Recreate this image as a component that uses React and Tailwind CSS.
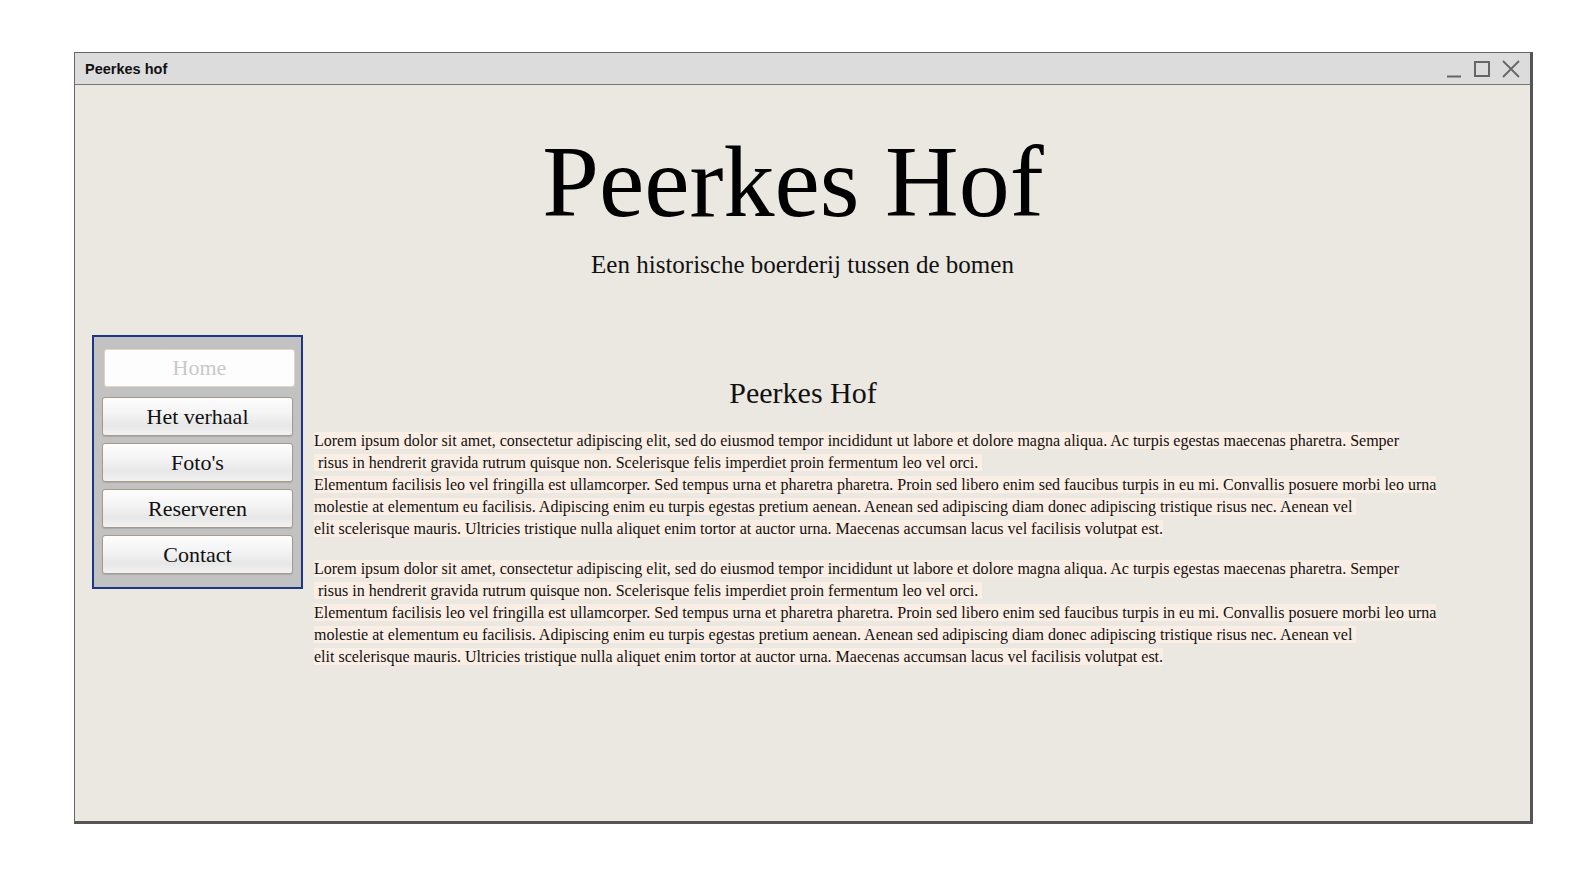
import React from 'react';

const serif = { fontFamily: '"Liberation Serif", "Times New Roman", serif' };

const navItems = ['Het verhaal', "Foto's", 'Reserveren', 'Contact'];

const paragraphLines = [
  'Lorem ipsum dolor sit amet, consectetur adipiscing elit, sed do eiusmod tempor incididunt ut labore et dolore magna aliqua. Ac turpis egestas maecenas pharetra. Semper ',
  '\u00a0risus in hendrerit gravida rutrum quisque non. Scelerisque felis imperdiet proin fermentum leo vel orci.\u00a0',
  'Elementum facilisis leo vel fringilla est ullamcorper. Sed tempus urna et pharetra pharetra. Proin sed libero enim sed faucibus turpis in eu mi. Convallis posuere morbi leo urna',
  'molestie at elementum eu facilisis. Adipiscing enim eu turpis egestas pretium aenean. Aenean sed adipiscing diam donec adipiscing tristique risus nec. Aenean vel\u00a0',
  'elit scelerisque mauris. Ultricies tristique nulla aliquet enim tortor at auctor urna. Maecenas accumsan lacus vel facilisis volutpat est.',
];

const WindowControls = () => (
  <div className="flex items-center gap-[12px] text-[#666]">
    <svg width="16" height="18" viewBox="0 0 16 18" fill="none" stroke="currentColor" strokeWidth="2">
      <path d="M1 16.5h14" />
    </svg>
    <svg width="16" height="16" viewBox="0 0 16 16" fill="none" stroke="currentColor" strokeWidth="2">
      <rect x="1" y="1" width="14" height="14" />
    </svg>
    <svg width="18" height="18" viewBox="0 0 18 18" fill="none" stroke="currentColor" strokeWidth="1.8">
      <path d="M1 1l16 16M17 1L1 17" />
    </svg>
  </div>
);

const NavButton = ({ label }) => (
  <button
    className="h-[39px] w-[191px] rounded-[3px] border border-[#a89a88] bg-[linear-gradient(to_bottom,#fdfdfd_0%,#f4f4f4_40%,#e7e7e7_75%,#f2f2f2_100%)] text-[22px] leading-none text-[#111] shadow-[0_1px_1px_rgba(0,0,0,0.12)]"
    style={serif}
  >
    {label}
  </button>
);

const Paragraph = () => (
  <p className="mb-[18px] whitespace-nowrap text-[16px] leading-[22px] text-[#111]" style={serif}>
    {paragraphLines.map((line, i) => (
      <React.Fragment key={i}>
        <span className="bg-[#fbeee4]">{line}</span>
        {i < paragraphLines.length - 1 && <br />}
      </React.Fragment>
    ))}
  </p>
);

export default function App() {
  return (
    <div className="min-h-[871px] bg-white pl-[74px] pt-[52px]">
      <div className="flex h-[772px] w-[1459px] flex-col border-l border-t border-r-[3px] border-b-[3px] border-[#666] border-r-[#555] border-b-[#555] bg-[#ebe8e2]">
        {/* title bar */}
        <div className="flex h-[32px] shrink-0 items-center justify-between border-b border-[#777] bg-[#dcdcdc] pl-[10px] pr-[10px]">
          <span className="pt-[2px] text-[14.5px] font-bold text-[#111]" style={{ fontFamily: '"Liberation Sans", Arial, sans-serif' }}>
            Peerkes hof
          </span>
          <WindowControls />
        </div>

        {/* header */}
        <header className="flex flex-col items-center pt-[46px]" style={serif}>
          <h1 className="mr-[19px] text-[102px] leading-none text-black">Peerkes Hof</h1>
          <p className="mt-[19px] text-[25px] leading-none text-[#111]">Een historische boerderij tussen de bomen</p>
        </header>

        {/* body */}
        <div className="mt-[58px] flex items-start">
          <nav className="ml-[17px] flex w-[211px] shrink-0 flex-col gap-[7px] border-2 border-[#1d3686] bg-[#c2c2c2] pb-[13px] pl-[8px] pt-[12px]">
            <button
              className="mb-[3px] ml-[2px] h-[38px] w-[191px] rounded-[3px] border border-[#e2d5c3] bg-[#fdfdfd] text-[22px] leading-none text-[#c9c9c9]"
              style={serif}
            >
              Home
            </button>
            {navItems.map((item) => (
              <NavButton key={item} label={item} />
            ))}
          </nav>

          <main className="ml-[11px] w-[978px]">
            <h2 className="mt-[43px] text-center text-[30px] font-normal leading-none text-[#111]" style={serif}>
              Peerkes Hof
            </h2>
            <div className="mt-[22px]">
              <Paragraph />
              <Paragraph />
            </div>
          </main>
        </div>
      </div>
    </div>
  );
}
